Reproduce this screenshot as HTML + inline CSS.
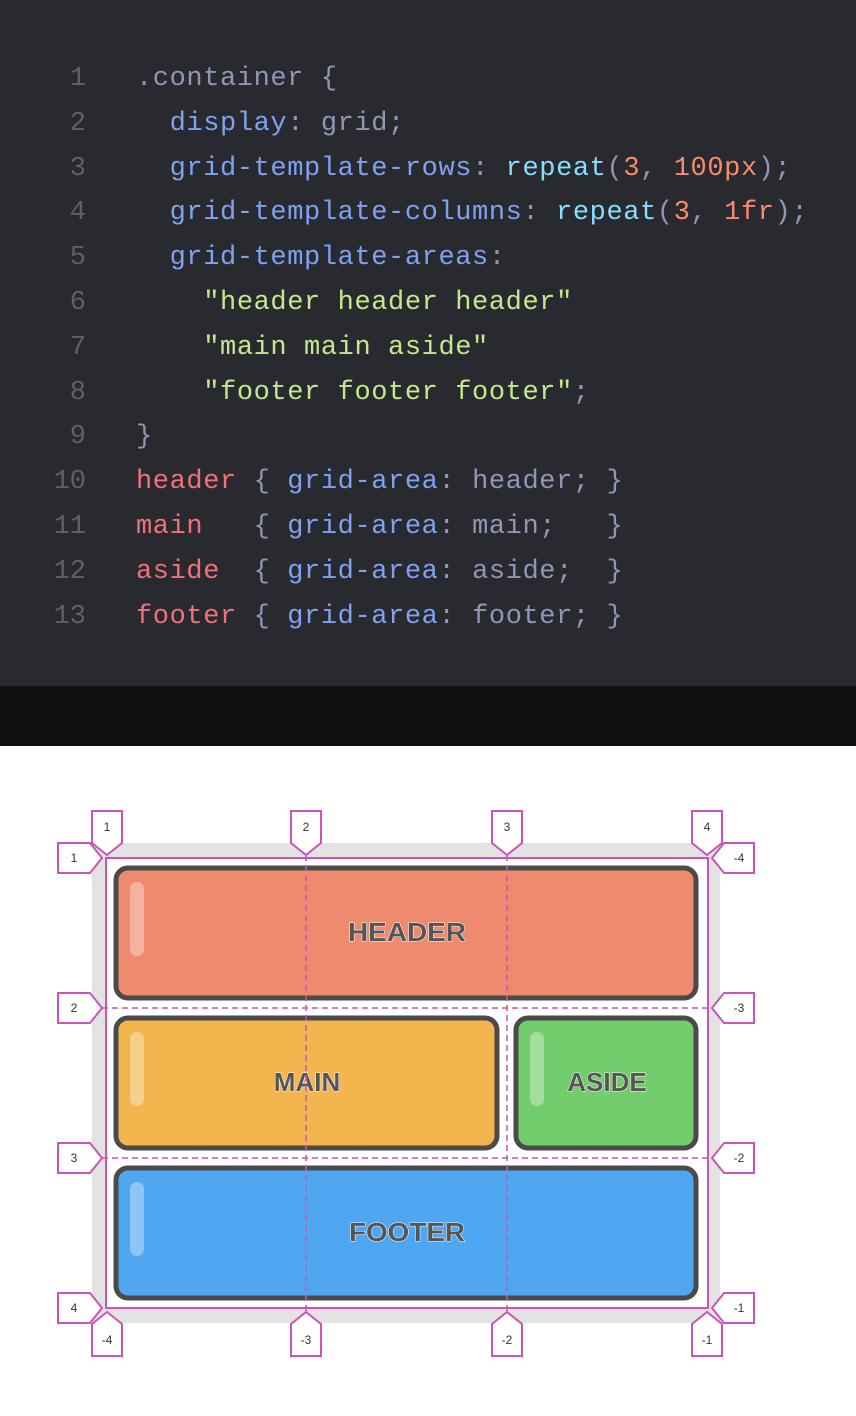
<!DOCTYPE html>
<html><head><meta charset="utf-8"><style>
body{margin:0;width:856px;height:1416px;background:#fff;overflow:hidden}
.code{position:absolute;left:0;top:0;width:856px;height:686px;background:#292a2f}
.band{position:absolute;left:0;top:686px;width:856px;height:60px;background:#111113}
pre{margin:0;position:absolute;top:57px;left:0;font-family:"Liberation Mono",monospace;font-size:27px;letter-spacing:0.6px;line-height:44.8px;color:#9196b8;white-space:pre}
.n{display:inline-block;width:86px;text-align:right;color:#5d6169;margin-right:50px;letter-spacing:0}
.p{color:#7fa2f0}.s{color:#c3e88d}.o{color:#f78c6c}.c{color:#89ddff}.r{color:#f07178}
svg{position:absolute;left:0;top:746px}
</style></head><body>
<div class="code"><pre><span class="n">1</span>.container {
<span class="n">2</span>  <span class="p">display</span>: grid;
<span class="n">3</span>  <span class="p">grid-template-rows</span>: <span class="c">repeat</span>(<span class="o">3</span>, <span class="o">100px</span>);
<span class="n">4</span>  <span class="p">grid-template-columns</span>: <span class="c">repeat</span>(<span class="o">3</span>, <span class="o">1fr</span>);
<span class="n">5</span>  <span class="p">grid-template-areas</span>:
<span class="n">6</span>    <span class="s">"header header header"</span>
<span class="n">7</span>    <span class="s">"main main aside"</span>
<span class="n">8</span>    <span class="s">"footer footer footer"</span>;
<span class="n">9</span>}
<span class="n">10</span><span class="r">header</span> { <span class="p">grid-area</span>: header; }
<span class="n">11</span><span class="r">main</span>   { <span class="p">grid-area</span>: main;   }
<span class="n">12</span><span class="r">aside</span>  { <span class="p">grid-area</span>: aside;  }
<span class="n">13</span><span class="r">footer</span> { <span class="p">grid-area</span>: footer; }</pre></div>
<div class="band"></div>
<svg width="856" height="670" viewBox="0 746 856 670" font-family="Liberation Sans,sans-serif">
<rect x="92" y="843" width="628" height="480" fill="#e3e3e3"/>
<rect x="106" y="858" width="602" height="450" fill="#fff" stroke="#c955b8" stroke-width="2"/>
<g stroke="#4a4a4a" stroke-width="5">
<rect x="116" y="868" width="580" height="130" rx="12" fill="#ee8b6e"/>
<rect x="116" y="1018" width="381" height="130" rx="12" fill="#f3b64f"/>
<rect x="516" y="1018" width="180" height="130" rx="12" fill="#74cd6c"/>
<rect x="116" y="1168" width="580" height="130" rx="12" fill="#4fa7f2"/>
</g>
<g fill="#fff" opacity="0.35"><rect x="130" y="882" width="14" height="74" rx="7"/><rect x="130" y="1032" width="14" height="74" rx="7"/><rect x="530" y="1032" width="14" height="74" rx="7"/><rect x="130" y="1182" width="14" height="74" rx="7"/></g>
<g font-weight="bold" font-size="26" fill="#555" stroke="#fff" stroke-width="1" paint-order="stroke" text-anchor="middle">
<text x="407" y="941" textLength="118" lengthAdjust="spacingAndGlyphs">HEADER</text><text x="307" y="1091">MAIN</text><text x="607" y="1091">ASIDE</text><text x="407" y="1241" textLength="116" lengthAdjust="spacingAndGlyphs">FOOTER</text></g>
<g stroke="#c955b8" stroke-width="1.5" stroke-dasharray="6,4">
<line x1="306" y1="855" x2="306" y2="1312"/><line x1="507" y1="855" x2="507" y2="1312"/>
<line x1="102" y1="1008" x2="712" y2="1008"/><line x1="102" y1="1158" x2="712" y2="1158"/></g>
<g fill="#fff" stroke="#c955b8" stroke-width="2">
<path d="M92 811h30v32l-15 12l-15-12z"/><path d="M291 811h30v32l-15 12l-15-12z"/><path d="M492 811h30v32l-15 12l-15-12z"/><path d="M692 811h30v32l-15 12l-15-12z"/>
<path d="M92 1356h30v-32l-15-12l-15 12z"/><path d="M291 1356h30v-32l-15-12l-15 12z"/><path d="M492 1356h30v-32l-15-12l-15 12z"/><path d="M692 1356h30v-32l-15-12l-15 12z"/>
<path d="M58 843h32l12 15l-12 15h-32z"/><path d="M58 993h32l12 15l-12 15h-32z"/><path d="M58 1143h32l12 15l-12 15h-32z"/><path d="M58 1293h32l12 15l-12 15h-32z"/>
<path d="M754 843h-30l-12 15l12 15h30z"/><path d="M754 993h-30l-12 15l12 15h30z"/><path d="M754 1143h-30l-12 15l12 15h30z"/><path d="M754 1293h-30l-12 15l12 15h30z"/>
</g>
<g font-size="12" fill="#333" text-anchor="middle">
<text x="107" y="831">1</text><text x="306" y="831">2</text><text x="507" y="831">3</text><text x="707" y="831">4</text>
<text x="107" y="1344">-4</text><text x="306" y="1344">-3</text><text x="507" y="1344">-2</text><text x="707" y="1344">-1</text>
<text x="74" y="862">1</text><text x="74" y="1012">2</text><text x="74" y="1162">3</text><text x="74" y="1312">4</text>
<text x="739" y="862">-4</text><text x="739" y="1012">-3</text><text x="739" y="1162">-2</text><text x="739" y="1312">-1</text>
</g>
</svg>
</body></html>
